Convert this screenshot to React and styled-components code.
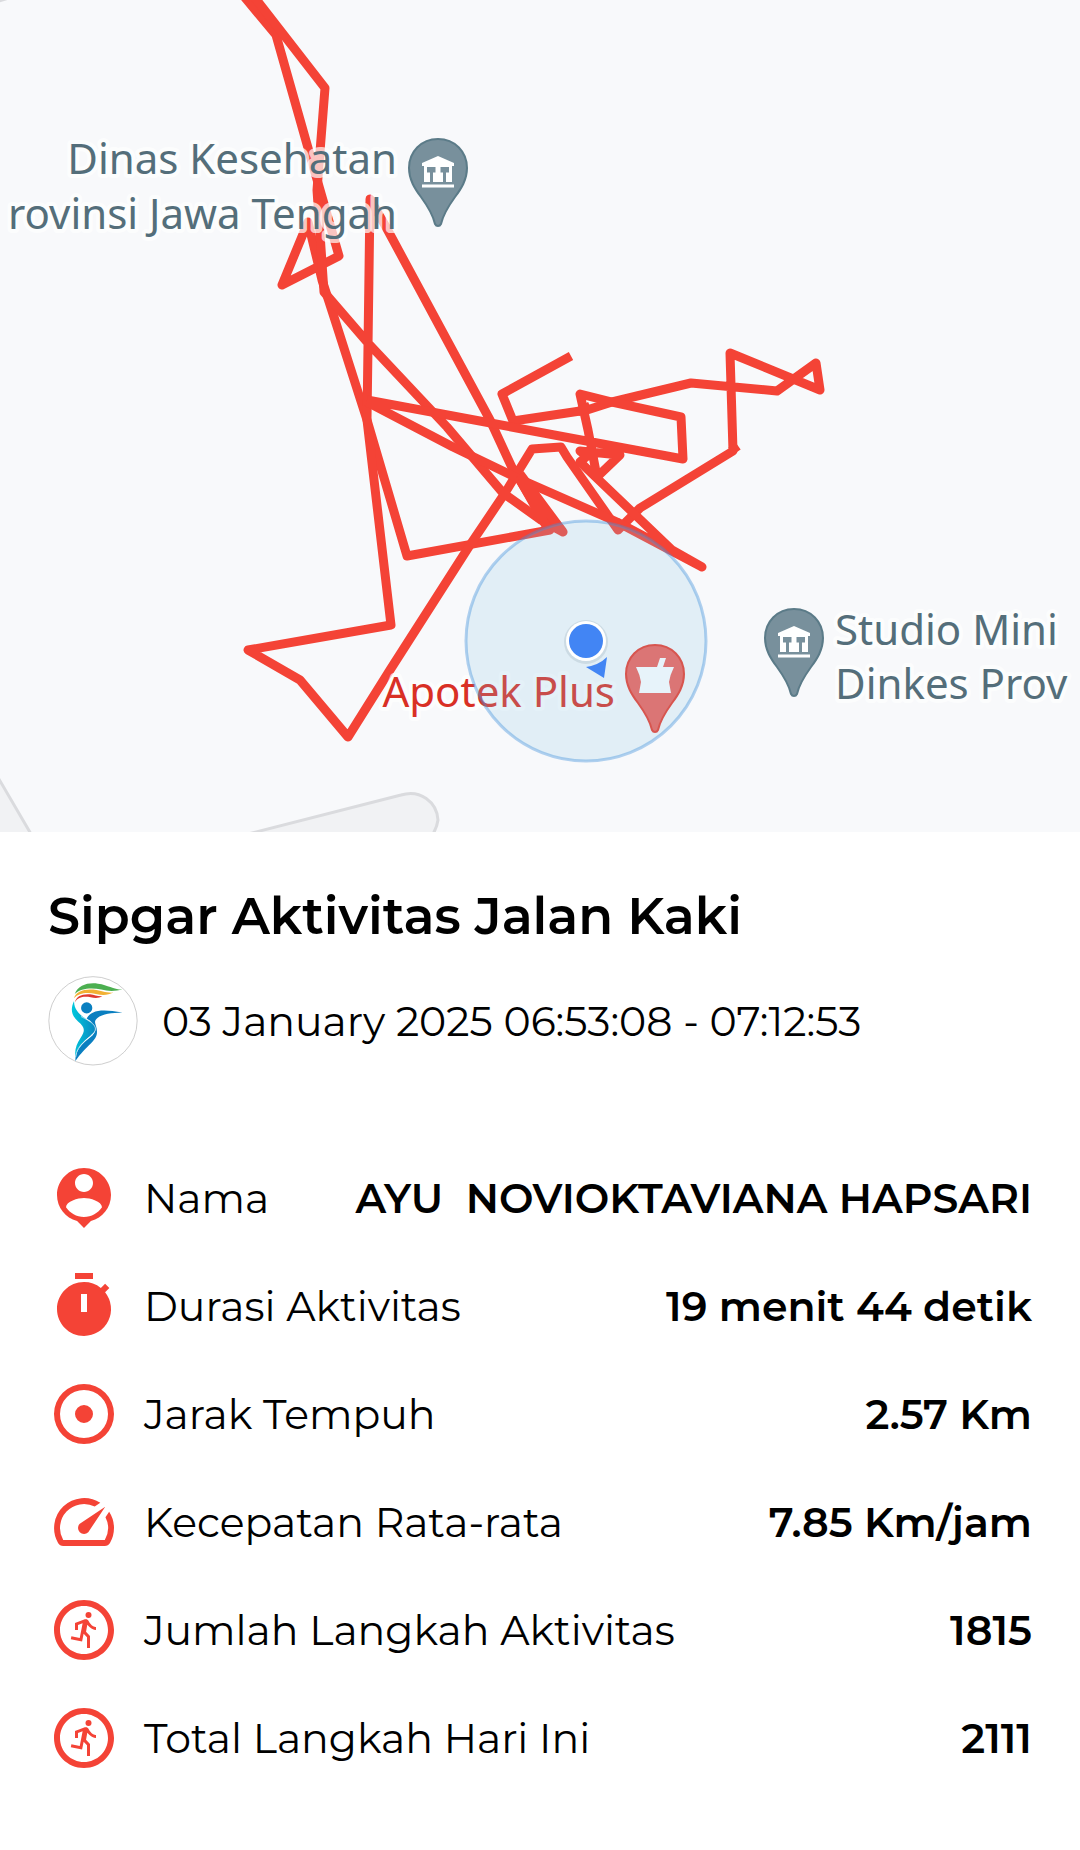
import React from 'react';
import styled, { createGlobalStyle } from 'styled-components';
import { MdOutlineRunCircle } from 'react-icons/md';

const GlobalStyle = createGlobalStyle`
  * {
    box-sizing: border-box;
  }

  body {
    margin: 0;
    background: #ffffff;
    color: #000000;
    font-family: Montserrat, Inter, 'Liberation Sans', sans-serif;
  }
`;

const Page = styled.main`
  display: flex;
  flex-direction: column;
`;

const MapView = styled.svg`
  display: block;
  width: 100%;
  height: auto;
  background: #f8f9fb;
`;

const Road = styled.path`
  fill: #f1f2f4;
  stroke: #dadbde;
  stroke-width: 3;
`;

const Track = styled.path`
  fill: none;
  stroke: #f44336;
  stroke-width: 9;
  stroke-linejoin: round;
`;

const PlaceName = styled.text`
  fill: ${({ $color }) => $color};
  stroke: rgba(255, 255, 255, 0.7);
  stroke-width: 8;
  stroke-linejoin: round;
  paint-order: stroke;
  font-family: 'Noto Sans', 'Open Sans', sans-serif;
  font-size: 42px;
  text-anchor: ${({ $anchor }) => $anchor || 'start'};
`;

const Summary = styled.section`
  display: flex;
  flex-direction: column;
  padding: 48px;
`;

const Title = styled.h1`
  margin: 0;
  font-size: 51px;
  line-height: 72px;
  font-weight: 600;
`;

const TimeRow = styled.div`
  display: flex;
  align-items: center;
  gap: 24px;
  margin-top: 24px;
  font-size: 41px;
  line-height: 48px;
  font-weight: 400;
`;

const Logo = styled.svg`
  flex: none;
  width: 90px;
  height: 90px;
`;

const StatList = styled.dl`
  display: flex;
  flex-direction: column;
  gap: 36px;
  margin: 96px 0 0;
`;

const Stat = styled.div`
  display: flex;
  align-items: center;
  gap: 24px;
  font-size: 41px;
  line-height: 48px;

  svg {
    flex: none;
    width: 72px;
    height: 72px;
    fill: #f44336;
  }
`;

const StatLabel = styled.dt`
  font-weight: 400;
`;

const StatValue = styled.dd`
  flex: 1;
  margin: 0;
  font-weight: 600;
  text-align: right;
  white-space: pre;
`;

const PIN =
  'M0 -88C17 -88 29 -75 29 -59C29 -47 23 -38 17 -30C9 -19 5 -12 3 -3Q2 -1 0 -1Q-2 -1 -3 -3C-5 -12 -9 -19 -17 -30C-23 -38 -29 -47 -29 -59C-29 -75 -17 -88 0 -88Z';

function OfficePin({ x, y }) {
  return (
    <g transform={`translate(${x} ${y})`}>
      <path d={PIN} fill="#78909c" stroke="#5b7b88" strokeWidth="2" />
      <path
        fill="#ffffff"
        d="M0 -71L16 -64V-61H14V-45H-14V-61H-16V-64ZM-16 -42.500H16V-39.500H-16Z"
      />
      <path
        fill="#78909c"
        d="M-11 -60H-2.500V-54.500H-5V-45H-8V-54.500H-11ZM11 -60H2.500V-54.500H5V-45H8V-54.500H11Z"
      />
    </g>
  );
}

function PharmacyPin({ x, y }) {
  return (
    <g transform={`translate(${x} ${y})`}>
      <path d={PIN} fill="#f06259" stroke="#ec3a2a" strokeWidth="2" />
      <path
        fill="#ffffff"
        d="M-19 -66H2L5 -75H11L8 -66H19Q15 -58 14 -51L16 -40H-16L-14 -51Q-15 -58 -19 -66Z"
      />
    </g>
  );
}

function ActivityMap() {
  return (
    <MapView viewBox="0 0 1080 832" role="img" aria-label="Rute aktivitas">
      <Road d="M-4 774L31 834H-4Z" />
      <Road d="M248 834L401 795C420 789 437 802 438 820Q437 827 433 834Z" />
      <Road d="M-4 2L12 -3H-4Z" />

      <Track d="M242 -6L276 35L310 155L339 256L282 285L308 222L322 280L334 317L367 420L407 556L550 530L515 472" />
      <Track d="M252 -6L325 88L317 190L324 292L368 343L447 427L503 493L541 520L563 532L515 474L490 420L386 227L370 199L367 420L391 625L248 650L300 680L348 737L390 670L470 545L505 493L532 449L561 447L567 457L618 530L640 508L733 451L730 353L820 390L816 363L777 391L691 383L612 402L587 410L513 421L502 394L571 356" />
      <Track d="M367 400L683 459L681 417L612 402L580 394L588 430L597 477L620 455L580 451L587 456L580 462L672 550L702 567L617 522L515 477L453 447L367 402" />
      <Track d="M577 412L590 406M520 480L549 531M520 474L563 532M732 445L737 452" />

      <PlaceName x="397" y="174" $color="#546e7a" $anchor="end">
        Dinas Kesehatan
      </PlaceName>
      <PlaceName x="397" y="229" $color="#546e7a" $anchor="end">
        rovinsi Jawa Tengah
      </PlaceName>
      <OfficePin x={438} y={227} />

      <PlaceName x="835" y="645" $color="#546e7a">
        Studio Mini
      </PlaceName>
      <PlaceName x="835" y="699" $color="#546e7a">
        Dinkes Prov
      </PlaceName>
      <OfficePin x={794} y={697} />

      <PlaceName x="615" y="707" $color="#d93025" $anchor="end">
        Apotek Plus
      </PlaceName>
      <PharmacyPin x={655} y={733} />

      <circle
        cx="586"
        cy="641"
        r="120"
        fill="rgba(133, 194, 231, 0.2)"
        stroke="rgba(66, 145, 220, 0.4)"
        strokeWidth="3"
      />
      <circle cx="586" cy="642" r="22" fill="rgba(60, 80, 100, 0.12)" />
      <circle cx="586" cy="641" r="20" fill="#ffffff" />
      <circle cx="586" cy="641" r="17" fill="#4285f4" />
      <path d="M586 667Q599 665 607 657L604 678Z" fill="#4285f4" />
    </MapView>
  );
}

function SipgarLogo() {
  return (
    <Logo viewBox="54 17 270 271" aria-hidden="true">
      <defs>
        <linearGradient id="body" x1="0" y1="0" x2="1" y2="0">
          <stop offset="0" stopColor="#00c8dc" />
          <stop offset="1" stopColor="#0a86c0" />
        </linearGradient>
      </defs>
      <circle cx="189" cy="152" r="133" fill="#ffffff" stroke="#b5b5b5" strokeWidth="2" />
      <path fill="#4caf50" d="M134 71C145 45 172 36 204 40C235 44 248 57 278 58C258 63 235 64 214 58C185 51 151 54 134 71Z" />
      <path fill="#f2b134" d="M132 84C136 65 162 55 190 58C217 62 226 68 250 67C234 75 218 76 198 71C172 66 146 67 132 84Z" />
      <path fill="#e03a30" d="M135 96C137 79 156 70 180 72C194 73 202 79 217 78C207 84 195 84 182 81C160 78 144 80 135 96Z" />
      <circle cx="170" cy="113" r="17" fill="#0a7fc0" />
      <path fill="url(#body)" d="M132 92C119 119 126 138 144 154C165 172 166 181 152 203C139 222 132 243 137 262C144 230 159 215 183 196C198 183 202 174 190 160C164 144 131 127 132 92Z" />
      <path fill="#0a7fc0" d="M170 145C183 121 211 114 278 127C242 128 211 132 198 148C190 158 201 166 201 184C202 213 170 223 136 273C134 242 157 220 180 202C209 180 195 160 170 145Z" />
      <path fill="none" stroke="#ffffff" strokeWidth="2" d="M153 139C180 153 207 168 192 187C176 208 141 220 137 261" />
    </Logo>
  );
}

const PersonPinIcon = () => (
  <svg viewBox="0 0 24 24" aria-hidden="true">
    <path d="M12 2c-4.970 0-9 4.030-9 9 0 4.170 2.840 7.670 6.690 8.690L12 22l2.310-2.310C18.160 18.670 21 15.170 21 11c0-4.970-4.030-9-9-9zm0 2c1.660 0 3 1.340 3 3s-1.340 3-3 3-3-1.340-3-3 1.340-3 3-3zm0 14.300c-2.500 0-4.710-1.280-6-3.220.030-1.990 4-3.080 6-3.080 1.990 0 5.970 1.090 6 3.080-1.290 1.940-3.500 3.220-6 3.220z" />
  </svg>
);

const TimerIcon = () => (
  <svg viewBox="0 0 24 24" aria-hidden="true">
    <path d="M9 1h6v2H9zM19.030 7.390l1.420-1.420-1.410-1.410-1.420 1.420A8.960 8.960 0 0 0 12 4c-4.970 0-9 4.030-9 9s4.020 9 9 9a8.990 8.990 0 0 0 7.030-14.610zM13 14h-2V8h2v6z" />
  </svg>
);

const DistanceIcon = () => (
  <svg viewBox="0 0 24 24" aria-hidden="true">
    <path d="M12 2a10 10 0 1 0 0 20 10 10 0 0 0 0-20zm0 18a8 8 0 1 1 0-16 8 8 0 0 1 0 16zM12 9a3 3 0 1 0 0 6 3 3 0 0 0 0-6z" />
  </svg>
);

const SpeedIcon = () => (
  <svg viewBox="0 0 24 24" aria-hidden="true">
    <path d="M20.380 8.570l-1.230 1.850a8 8 0 0 1-.220 7.580H5.070A8 8 0 0 1 15.580 6.850l1.850-1.230A10 10 0 0 0 3.350 19a2 2 0 0 0 1.720 1h13.850a2 2 0 0 0 1.740-1 10 10 0 0 0-.270-10.440zm-9.790 6.840a2 2 0 0 0 2.830 0l5.660-8.490-8.490 5.660a2 2 0 0 0 0 2.830z" />
  </svg>
);

const stats = [
  { icon: PersonPinIcon, label: 'Nama', value: 'AYU  NOVIOKTAVIANA HAPSARI' },
  { icon: TimerIcon, label: 'Durasi Aktivitas', value: '19 menit 44 detik' },
  { icon: DistanceIcon, label: 'Jarak Tempuh', value: '2.57 Km' },
  { icon: SpeedIcon, label: 'Kecepatan Rata-rata', value: '7.85 Km/jam' },
  { icon: MdOutlineRunCircle, label: 'Jumlah Langkah Aktivitas', value: '1815' },
  { icon: MdOutlineRunCircle, label: 'Total Langkah Hari Ini', value: '2111' },
];

function App() {
  return (
    <Page>
      <GlobalStyle />
      <ActivityMap />
      <Summary>
        <Title>Sipgar Aktivitas Jalan Kaki</Title>
        <TimeRow>
          <SipgarLogo />
          <time>03 January 2025 06:53:08 - 07:12:53</time>
        </TimeRow>
        <StatList>
          {stats.map(({ icon: Icon, label, value }) => (
            <Stat key={label}>
              <Icon />
              <StatLabel>{label}</StatLabel>
              <StatValue>{value}</StatValue>
            </Stat>
          ))}
        </StatList>
      </Summary>
    </Page>
  );
}

export default App;
